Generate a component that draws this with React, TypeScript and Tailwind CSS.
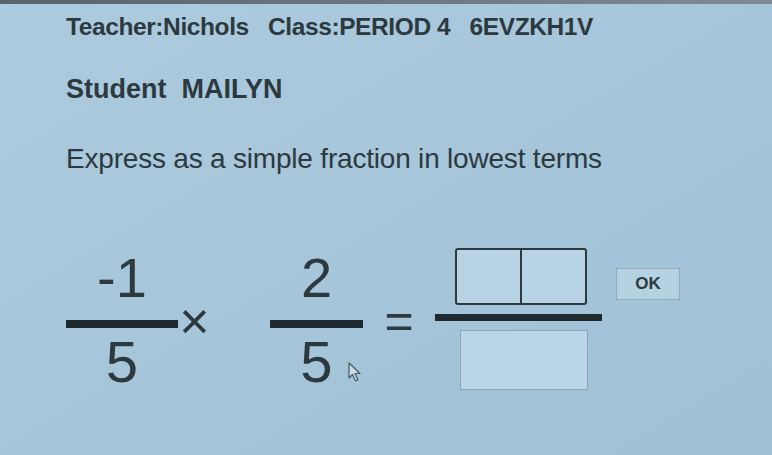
export default function App() {
  return (
    <div className="relative w-[772px] h-[455px] overflow-hidden bg-gradient-to-br from-[#accbdf] to-[#a0c0d5] text-[#2c393f] font-['Liberation_Sans',Arial,sans-serif]">
      <div className="h-[4px] bg-gradient-to-r from-[#56646c] to-[#7d8c94]" />
      <div className="pl-[66px]">
        <div className="mt-[9px] text-[24.5px] font-bold leading-[28px] tracking-[-0.4px] whitespace-pre">
          Teacher:Nichols   Class:PERIOD 4   6EVZKH1V
        </div>
        <div className="mt-[34px] text-[27px] font-bold leading-[28px] whitespace-pre">
          Student  MAILYN
        </div>
        <div className="mt-[42px] text-[28px] leading-[28px] tracking-[-0.2px]">Express as a simple fraction in lowest terms</div>

        <div className="mt-[75px] flex items-start">
          {/* -1 / 5 */}
          <div className="mt-[2px] flex w-[112px] flex-col items-center">
            <div className="h-[58px] text-[56px] leading-none">-1</div>
            <div className="mt-[12px] h-[8px] w-full bg-[#1f2a30]" />
            <div className="mt-[5px] h-[58px] text-[58px] leading-none">5</div>
          </div>

          <div className="ml-[2px] mt-[53px] flex h-[40px] w-[29px] items-center justify-center text-[52px] leading-none">
            ×
          </div>

          {/* 2 / 5 */}
          <div className="ml-[61px] mt-[2px] flex w-[93px] flex-col items-center">
            <div className="h-[58px] text-[56px] leading-none">2</div>
            <div className="mt-[12px] h-[8px] w-full bg-[#1f2a30]" />
            <div className="mt-[5px] h-[58px] text-[58px] leading-none">5</div>
          </div>

          <div className="ml-[22px] mt-[58px] flex h-[30px] w-[28px] items-center justify-center text-[50px] leading-none">
            =
          </div>

          {/* answer */}
          <div className="ml-[22px] flex w-[167px] flex-col">
            <div className="ml-[20px] flex h-[57px] w-[132px] rounded-[3px] border-[2px] border-[#2c393f] bg-[#b7d3e5]">
              <div className="flex-1 border-r-[2px] border-[#2c393f]" />
              <div className="flex-1" />
            </div>
            <div className="mt-[9px] h-[7px] w-full bg-[#1f2a30]" />
            <div className="ml-[25px] mt-[9px] h-[60px] w-[128px] border border-[#8ea5b3] bg-[#b9d5e7]" />
          </div>

          <button
            type="button"
            className="ml-[14px] mt-[20px] flex h-[32px] w-[64px] items-center justify-center border border-[#93abb9] bg-[#b6d1e2] text-[17px] font-bold text-[#2c393f]"
          >
            OK
          </button>
        </div>
      </div>

      {/* mouse pointer */}
      <svg className="absolute left-[348px] top-[362px]" width="14" height="20" viewBox="0 0 14 20">
        <path d="M1 1 L1 16 L4.5 12.5 L7.5 19 L10 18 L7 11.5 L12 11.5 Z" fill="#c9dde9" stroke="#4a5860" strokeWidth="1.2" strokeLinejoin="round" />
      </svg>
    </div>
  )
}
